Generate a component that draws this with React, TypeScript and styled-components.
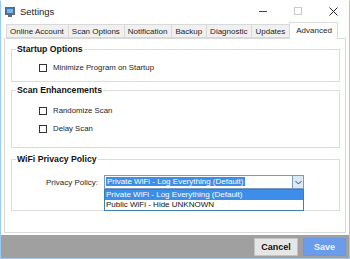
import React from 'react'
import styled, { createGlobalStyle } from 'styled-components'

const GlobalStyle = createGlobalStyle`
  html, body {
    margin: 0;
    padding: 0;
    background: #ffffff;
  }
  * {
    box-sizing: border-box;
  }
`

const tabs = ['Online Account', 'Scan Options', 'Notification', 'Backup', 'Diagnostic', 'Updates', 'Advanced']

function AppIcon() {
  return (
    <svg width="10" height="10" viewBox="0 0 10 10">
      <rect x="0.5" y="0.5" width="9" height="7" fill="#3a78b8" stroke="#5a6a7a" strokeWidth="1" />
      <rect x="2" y="2" width="6" height="4" fill="#7fb2e6" />
      <rect x="3" y="8" width="4" height="2" fill="#6b6b6b" />
    </svg>
  )
}

function Chevron() {
  return (
    <svg width="7" height="5" viewBox="0 0 7 5">
      <path d="M0.5 1 L3.5 4 L6.5 1" fill="none" stroke="#444" strokeWidth="1" />
    </svg>
  )
}

function App() {
  return (
    <>
      <GlobalStyle />
      <SWindow>
        <STitleBar>
          <STitle>
            <AppIcon />
            <span>Settings</span>
          </STitle>
          <SControls>
            <SMinimize />
            <SMaximize />
            <SClose>
              <svg width="9" height="9" viewBox="0 0 9 9">
                <path d="M0.5 0.5 L8.5 8.5 M8.5 0.5 L0.5 8.5" stroke="#222" strokeWidth="1" />
              </svg>
            </SClose>
          </SControls>
        </STitleBar>

        <STabsArea>
          <STabRow>
            {tabs.map((t) => (
              <STab key={t} active={t === 'Advanced'}>
                {t}
              </STab>
            ))}
          </STabRow>
          <STabPage>
            <SGroup height={38}>
              <SLegend>Startup Options</SLegend>
              <SGroupBody top={9}>
                <SCheckRow>
                  <SCheckBox />
                  <span>Minimize Program on Startup</span>
                </SCheckRow>
              </SGroupBody>
            </SGroup>

            <SGroup height={63} top={3}>
              <SLegend>Scan Enhancements</SLegend>
              <SGroupBody top={11}>
                <SCheckRow>
                  <SCheckBox />
                  <span>Randomize Scan</span>
                </SCheckRow>
                <SCheckRow>
                  <SCheckBox />
                  <span>Delay Scan</span>
                </SCheckRow>
              </SGroupBody>
            </SGroup>

            <SGroup height={57} top={6}>
              <SLegend>WiFi Privacy Policy</SLegend>
              <SPolicyRow>
                <SFieldLabel>Privacy Policy:</SFieldLabel>
                <SSelectWrap>
                  <SSelect>
                    <SSelectValue>
                      <SHighlight>Private WiFi - Log Everything (Default)</SHighlight>
                    </SSelectValue>
                    <SArrow>
                      <Chevron />
                    </SArrow>
                  </SSelect>
                  <SDropList>
                    <SOption selected>Private WiFi - Log Everything (Default)</SOption>
                    <SOption>Public WiFi - Hide UNKNOWN</SOption>
                  </SDropList>
                </SSelectWrap>
              </SPolicyRow>
            </SGroup>
          </STabPage>
        </STabsArea>

        <SFooter>
          <SButton>Cancel</SButton>
          <SButton primary>Save</SButton>
        </SFooter>
      </SWindow>
    </>
  )
}

export default App

const SWindow = styled.div`
  width: 350px;
  height: 259px;
  border: 1px solid #9ccaf2;
  border-top-color: #ffffff;
  background: #ffffff;
  display: flex;
  flex-direction: column;
  font-family: 'Liberation Sans', Arial, sans-serif;
  font-size: 8px;
  color: #1e1e1e;
  overflow: hidden;
`

const STitleBar = styled.div`
  height: 20px;
  display: flex;
  align-items: center;
  justify-content: space-between;
  padding: 0 11px 0 4px;
`

const STitle = styled.div`
  display: flex;
  align-items: center;
  gap: 5px;
  font-size: 9.5px;
  color: #222;

  & > svg {
    margin-top: 1px;
  }
`

const SControls = styled.div`
  display: flex;
  align-items: center;
  gap: 27px;
`

const SMinimize = styled.div`
  width: 8px;
  height: 1px;
  background: #444;
`

const SMaximize = styled.div`
  width: 8px;
  height: 8px;
  border: 1px solid #c8c8c8;
`

const SClose = styled.div`
  display: flex;
`

const STabsArea = styled.div`
  padding: 1px 3px 0 3px;
  display: flex;
  flex-direction: column;
`

const STabRow = styled.div`
  display: flex;
  align-items: flex-end;
  height: 16px;
  padding-left: 3px;
  position: relative;
  z-index: 1;
`

const STab = styled.div<{ active?: boolean }>`
  height: ${({ active }) => (active ? '17px' : '14px')};
  margin-bottom: ${({ active }) => (active ? '-1px' : '0')};
  padding: ${({ active }) => (active ? '2px 5px 0 6px' : '1px 4px 0 3px')};
  margin-left: -1px;
  border: 1px solid #d9d9d9;
  border-bottom: ${({ active }) => (active ? 'none' : '1px solid #d9d9d9')};
  background: ${({ active }) => (active ? '#ffffff' : '#f0f0f0')};
  font-size: 8px;
  line-height: 11px;
  white-space: nowrap;
  color: #1e1e1e;
`

const STabPage = styled.div`
  height: 195px;
  border: 1px solid #d9d9d9;
  background: #ffffff;
  padding: 5px 5px 0 6px;
  display: flex;
  flex-direction: column;
`

const SGroup = styled.fieldset<{ height: number; top?: number }>`
  margin: ${({ top }) => top || 0}px 0 0 0;
  height: ${({ height }) => height}px;
  padding: 0 4px;
  border: 1px solid #dcdcdc;
  min-width: 0;
`

const SLegend = styled.legend`
  padding: 0 1px;
  font-size: 8.7px;
  line-height: 10px;
  font-weight: bold;
  color: #111;
`

const SGroupBody = styled.div<{ top: number }>`
  display: flex;
  flex-direction: column;
  gap: 8px;
  padding: ${({ top }) => top}px 0 0 23px;
`

const SCheckRow = styled.div`
  display: flex;
  align-items: center;
  gap: 6px;
  height: 10px;
  line-height: 10px;
  font-size: 7.8px;
`

const SCheckBox = styled.div`
  width: 8px;
  height: 8px;
  border: 1px solid #333;
  background: #fff;
`

const SPolicyRow = styled.div`
  display: flex;
  align-items: center;
  gap: 6px;
  margin-top: 11px;
  margin-left: 28px;
`

const SFieldLabel = styled.span`
  width: 54px;
  text-align: right;
  white-space: nowrap;
  font-size: 8px;
`

const SSelectWrap = styled.div`
  position: relative;
`

const SSelect = styled.div`
  width: 200px;
  height: 14px;
  border: 1px solid #7a9cc0;
  display: flex;
  background: #fff;
`

const SSelectValue = styled.div`
  flex: 1;
  padding: 1px 0 0 1px;
  line-height: 10px;
  white-space: nowrap;
  font-size: 8px;
`

const SHighlight = styled.span`
  background: #3d8ee8;
  color: #ffffff;
  padding: 0 1px;
`

const SArrow = styled.div`
  width: 11px;
  border-left: 1px solid #7a9cc0;
  background: #dbe9f7;
  display: flex;
  align-items: center;
  justify-content: center;
`

const SDropList = styled.div`
  position: absolute;
  left: 0;
  top: 14px;
  width: 200px;
  border: 1px solid #3c7fb1;
  background: #fff;
`

const SOption = styled.div<{ selected?: boolean }>`
  height: 10px;
  line-height: 10px;
  padding-left: 1px;
  font-size: 8px;
  white-space: nowrap;
  background: ${({ selected }) => (selected ? '#3d8ee8' : '#ffffff')};
  color: ${({ selected }) => (selected ? '#ffffff' : '#111')};
`

const SFooter = styled.div`
  margin-top: 2px;
  flex: 1;
  background: #a0a0a0;
  display: flex;
  justify-content: flex-end;
  align-items: flex-start;
  gap: 5px;
  padding: 3px 3px 0 0;
`

const SButton = styled.button<{ primary?: boolean }>`
  height: 18px;
  width: ${({ primary }) => (primary ? '43px' : '44px')};
  margin: 0;
  padding: 0;
  border: 1px solid ${({ primary }) => (primary ? '#6a96e8' : '#c4c4c4')};
  background: ${({ primary }) => (primary ? '#6b9cec' : '#e6e6e6')};
  color: ${({ primary }) => (primary ? '#eef3ff' : '#111')};
  font-family: 'Liberation Sans', Arial, sans-serif;
  font-weight: bold;
  font-size: 9px;
`
